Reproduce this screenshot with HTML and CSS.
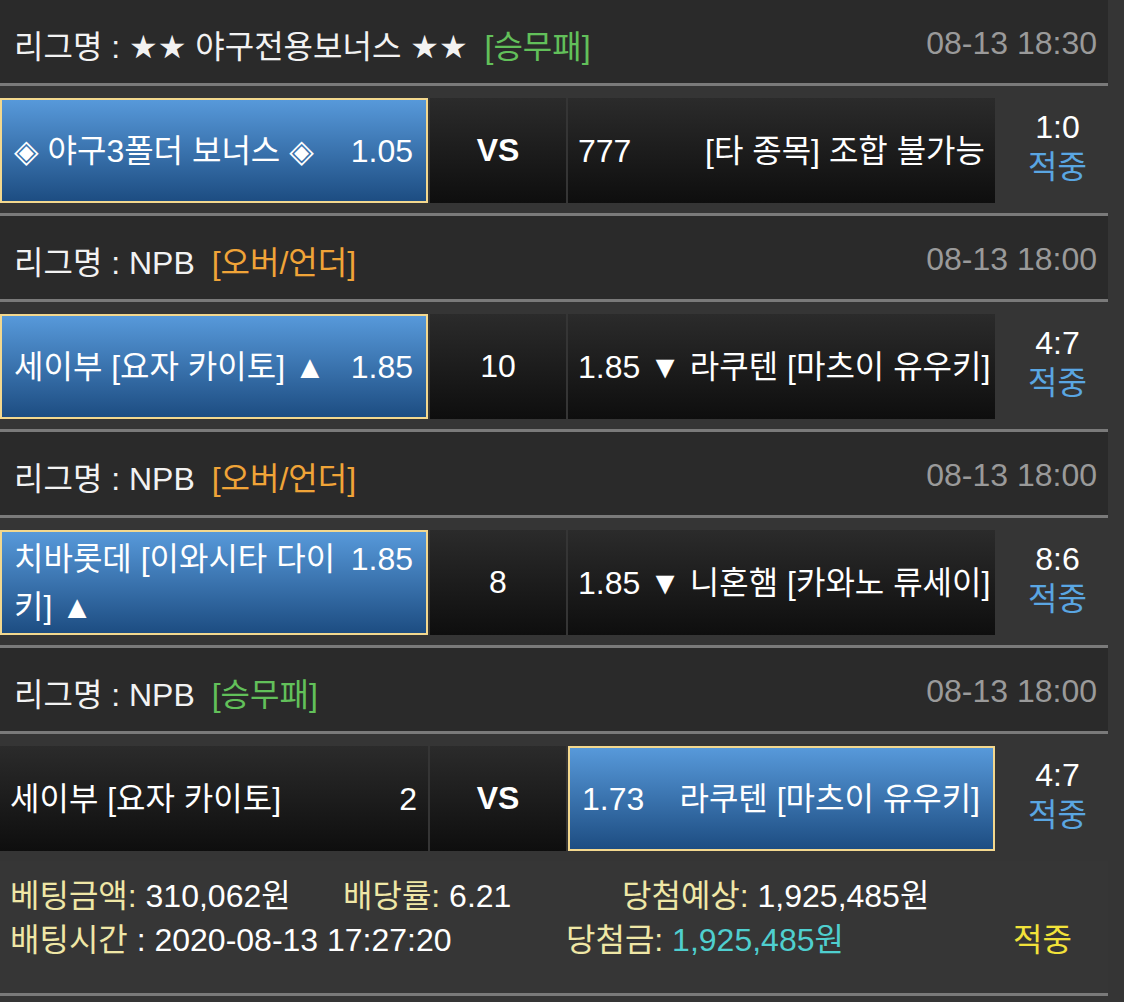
FILE: index.html
```html
<!DOCTYPE html>
<html lang="ko">
<head>
    <meta charset="UTF-8">
    <meta name="viewport" content="width=device-width, initial-scale=1.0">
    <title>베팅내역</title>
    <link rel="stylesheet" href="styles.css">
</head>
<body>
    <div class="bet-list">
        <!-- 1 -->
        <div class="league-row">
            <span class="league">리그명 : ★★ 야구전용보너스 ★★ <span class="tag win">[승무패]</span></span>
            <span class="date">08-13 18:30</span>
        </div>
        <div class="match-row">
            <div class="team home picked">
                <div class="team-inner">
                    <span class="name">◈ 야구3폴더 보너스 ◈</span>
                    <span class="odds">1.05</span>
                </div>
            </div>
            <div class="mid vs">VS</div>
            <div class="team away">
                <div class="team-inner">
                    <span class="odds">777</span>
                    <span class="name">[타 종목] 조합 불가능</span>
                </div>
            </div>
            <div class="result">
                <div class="score">1:0</div>
                <div class="hit">적중</div>
            </div>
        </div>

        <!-- 2 -->
        <div class="league-row">
            <span class="league">리그명 : NPB <span class="tag over">[오버/언더]</span></span>
            <span class="date">08-13 18:00</span>
        </div>
        <div class="match-row">
            <div class="team home picked">
                <div class="team-inner">
                    <span class="name">세이부 [요자 카이토] ▲</span>
                    <span class="odds">1.85</span>
                </div>
            </div>
            <div class="mid">10</div>
            <div class="team away">
                <div class="team-inner">
                    <span class="odds">1.85</span>
                    <span class="name">▼ 라쿠텐 [마츠이 유우키]</span>
                </div>
            </div>
            <div class="result">
                <div class="score">4:7</div>
                <div class="hit">적중</div>
            </div>
        </div>

        <!-- 3 -->
        <div class="league-row">
            <span class="league">리그명 : NPB <span class="tag over">[오버/언더]</span></span>
            <span class="date">08-13 18:00</span>
        </div>
        <div class="match-row">
            <div class="team home picked">
                <div class="team-inner">
                    <span class="name">치바롯데 [이와시타 다이키] ▲</span>
                    <span class="odds">1.85</span>
                </div>
            </div>
            <div class="mid">8</div>
            <div class="team away">
                <div class="team-inner">
                    <span class="odds">1.85</span>
                    <span class="name">▼ 니혼햄 [카와노 류세이]</span>
                </div>
            </div>
            <div class="result">
                <div class="score">8:6</div>
                <div class="hit">적중</div>
            </div>
        </div>

        <!-- 4 -->
        <div class="league-row">
            <span class="league">리그명 : NPB <span class="tag win">[승무패]</span></span>
            <span class="date">08-13 18:00</span>
        </div>
        <div class="match-row last">
            <div class="team home">
                <div class="team-inner">
                    <span class="name">세이부 [요자 카이토]</span>
                    <span class="odds">2</span>
                </div>
            </div>
            <div class="mid vs">VS</div>
            <div class="team away picked">
                <div class="team-inner">
                    <span class="odds">1.73</span>
                    <span class="name">라쿠텐 [마츠이 유우키]</span>
                </div>
            </div>
            <div class="result">
                <div class="score">4:7</div>
                <div class="hit">적중</div>
            </div>
        </div>

        <div class="summary">
            <div class="sum-line">
                <span class="sum-item amount"><span class="label">베팅금액:</span> 310,062원</span>
                <span class="sum-item rate"><span class="label">배당률:</span> 6.21</span>
                <span class="sum-item"><span class="label">당첨예상:</span> 1,925,485원</span>
            </div>
            <div class="sum-line">
                <span class="sum-item time"><span class="label">배팅시간</span> : 2020-08-13 17:27:20</span>
                <span class="sum-item prize"><span class="label">당첨금:</span> <span class="win-money">1,925,485원</span></span>
                <span class="sum-item status">적중</span>
            </div>
        </div>
    </div>
</body>
</html>
```

FILE: styles.css
```css
* {
    margin: 0;
    padding: 0;
    box-sizing: border-box;
}

body {
    font-family: "Liberation Sans", "DejaVu Sans", "Noto Sans CJK KR", sans-serif;
    font-size: 32px;
    font-feature-settings: "palt";
    background: #353535;
    color: #fff;
}

.bet-list {
    width: 1108px;
}

.league-row {
    display: flex;
    justify-content: space-between;
    align-items: center;
    height: 86px;
    padding: 4px 11px 0 14px;
    background: #2a2a2a;
    border-bottom: 3px solid #7a7a7a;
    color: #f2f2f2;
}

.tag {
    margin-left: 8px;
}

.tag.win {
    color: #62c05a;
}

.tag.over {
    color: #f0a438;
}

.date {
    color: #9a9a9a;
}

.match-row {
    display: flex;
    height: 130px;
    padding: 12px 0 10px;
    border-bottom: 3px solid #7a7a7a;
}

.match-row.last {
    height: 127px;
    border-bottom: none;
}

.team {
    width: 428px;
    display: flex;
    align-items: center;
    padding: 0 11px 0 10px;
    background: linear-gradient(#2b2b2b, #0e0e0e);
}

.team.away {
    width: 427px;
    padding: 0 10px;
}

.team.picked {
    border: 2px solid #f3d88e;
    background: linear-gradient(#5799da, #1d4d82);
    padding: 0 13px 0 12px;
}

.team-inner {
    display: flex;
    align-items: flex-start;
    justify-content: space-between;
    width: 100%;
    line-height: 48px;
}

.home .name {
    margin-right: 10px;
}

.away .name {
    text-align: right;
    white-space: nowrap;
    margin-left: 9px;
}

.mid {
    width: 136px;
    margin: 0 2px;
    display: flex;
    align-items: center;
    justify-content: center;
    background: linear-gradient(#2b2b2b, #0e0e0e);
}

.mid.vs {
    font-weight: bold;
}

.result {
    width: 113px;
    padding: 0 0 8px 12px;
    display: flex;
    flex-direction: column;
    justify-content: center;
    align-items: center;
    line-height: 40px;
}

.hit {
    color: #5aa6e2;
}

.summary {
    padding: 13px 0 31px 10px;
    border-bottom: 3px solid #7a7a7a;
    background: #363636;
    line-height: 44px;
}

.sum-line {
    display: flex;
}

.label {
    color: #efe7a6;
}

.sum-item.amount {
    width: 333px;
}

.sum-item.rate {
    width: 279px;
}

.sum-item.time {
    width: 556px;
}

.sum-item.prize {
    width: 447px;
}

.win-money {
    color: #4fcfcf;
}

.sum-item.status {
    color: #f2e33a;
}
```
